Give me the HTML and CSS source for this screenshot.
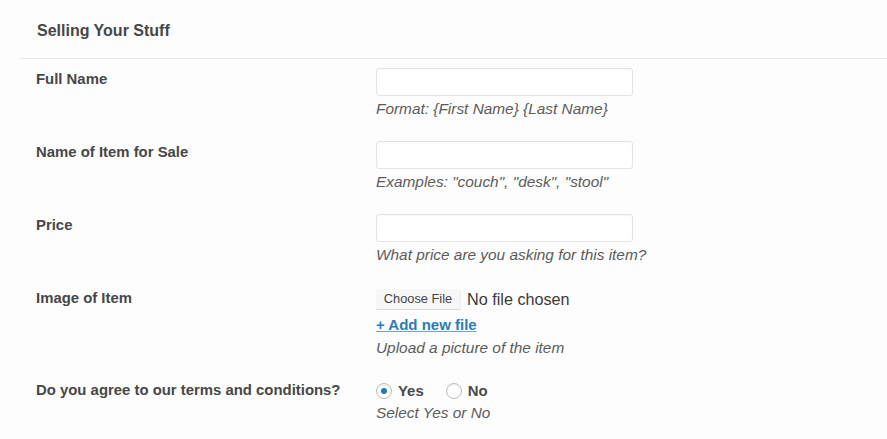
FILE: index.html
```html
<!DOCTYPE html>
<html lang="en">
<head>
<meta charset="utf-8">
<title>Selling Your Stuff</title>
<link rel="stylesheet" href="styles.css">
</head>
<body>
<div class="page">
  <div class="header">
    <h2 class="title">Selling Your Stuff</h2>
  </div>
  <div class="form">
    <div class="row">
      <div class="label">Full Name</div>
      <div class="field">
        <input class="text" type="text">
        <p class="desc">Format: {First Name} {Last Name}</p>
      </div>
    </div>
    <div class="row">
      <div class="label">Name of Item for Sale</div>
      <div class="field">
        <input class="text" type="text">
        <p class="desc">Examples: "couch", "desk", "stool"</p>
      </div>
    </div>
    <div class="row">
      <div class="label">Price</div>
      <div class="field">
        <input class="text" type="text">
        <p class="desc">What price are you asking for this item?</p>
      </div>
    </div>
    <div class="row row-file">
      <div class="label">Image of Item</div>
      <div class="field">
        <div class="file-line">
          <span class="file-btn">Choose File</span>
          <span class="file-none">No file chosen</span>
        </div>
        <a class="add-link" href="#">+ Add new file</a>
        <p class="desc desc-file">Upload a picture of the item</p>
      </div>
    </div>
    <div class="row row-radio">
      <div class="label">Do you agree to our terms and conditions?</div>
      <div class="field">
        <div class="radios">
          <label class="radio"><span class="dot checked"></span>Yes</label>
          <label class="radio"><span class="dot"></span>No</label>
        </div>
        <p class="desc desc-radio">Select Yes or No</p>
      </div>
    </div>
  </div>
</div>
</body>
</html>
```

FILE: styles.css
```css
html, body {
  margin: 0;
  padding: 0;
  background: #fdfdfd;
}
body {
  font-family: "Liberation Sans", Arial, sans-serif;
  color: #444;
  width: 887px;
  height: 439px;
  overflow: hidden;
}
.page {
  padding-left: 20px;
}
.header {
  box-sizing: border-box;
  height: 59px;
  border-bottom: 1px solid #e6e6e6;
  padding: 21px 0 0 17px;
}
.title {
  margin: 0;
  font-size: 16px;
  font-weight: bold;
  color: #464646;
  line-height: 20px;
}
.form {
  padding-left: 16px;
}
.row {
  display: flex;
  height: 73px;
}
.row-file {
  height: 92px;
}
.label {
  width: 340px;
  flex: none;
  font-size: 14.9px;
  font-weight: bold;
  color: #474747;
  line-height: 18px;
  padding-top: 11px;
}
.field {
  padding-top: 9px;
}
.text {
  display: block;
  box-sizing: border-box;
  width: 257px;
  height: 28px;
  margin: 0;
  border: 1px solid #e4e4e4;
  border-radius: 3px;
  background: #fff;
  box-shadow: inset 0 1px 2px rgba(0,0,0,0.04);
}
.desc {
  margin: 4px 0 0;
  font-size: 15.4px;
  font-style: italic;
  color: #5c5c5c;
  line-height: 18px;
}
.file-line {
  display: flex;
  align-items: center;
  margin-top: 1px;
  height: 22px;
}
.file-btn {
  display: inline-block;
  box-sizing: border-box;
  width: 85px;
  height: 21px;
  line-height: 20px;
  text-align: center;
  font-size: 12.8px;
  color: #444;
  background: #f7f7f7;
  border-bottom: 1px solid #d8d8d8;
  border-right: 1px solid #eee;
  border-radius: 2px;
}
.file-none {
  margin-left: 6px;
  font-size: 16.2px;
  color: #3a3a3a;
}
.add-link {
  display: inline-block;
  margin-top: 6px;
  font-size: 15px;
  font-weight: bold;
  color: #2a7db4;
  line-height: 18px;
  text-decoration: underline;
  text-decoration-color: #6aa7d0;
}
.desc-file {
  margin-top: 5px;
}
.radios {
  display: flex;
  align-items: center;
  height: 20px;
  margin-top: 2px;
}
.radio {
  display: flex;
  align-items: center;
  font-size: 14.9px;
  font-weight: bold;
  color: #4a4a4a;
  margin-right: 22px;
}
.dot {
  box-sizing: border-box;
  width: 16px;
  height: 16px;
  border-radius: 50%;
  border: 1px solid #b9bcc0;
  background: #fff;
  margin-right: 6px;
  position: relative;
  box-shadow: inset 0 1px 2px rgba(0,0,0,0.08);
}
.dot.checked::after {
  content: "";
  position: absolute;
  left: 4px;
  top: 4px;
  width: 6px;
  height: 6px;
  border-radius: 50%;
  background: #1e79c2;
}
.desc-radio {
  margin-top: 3px;
}
```
